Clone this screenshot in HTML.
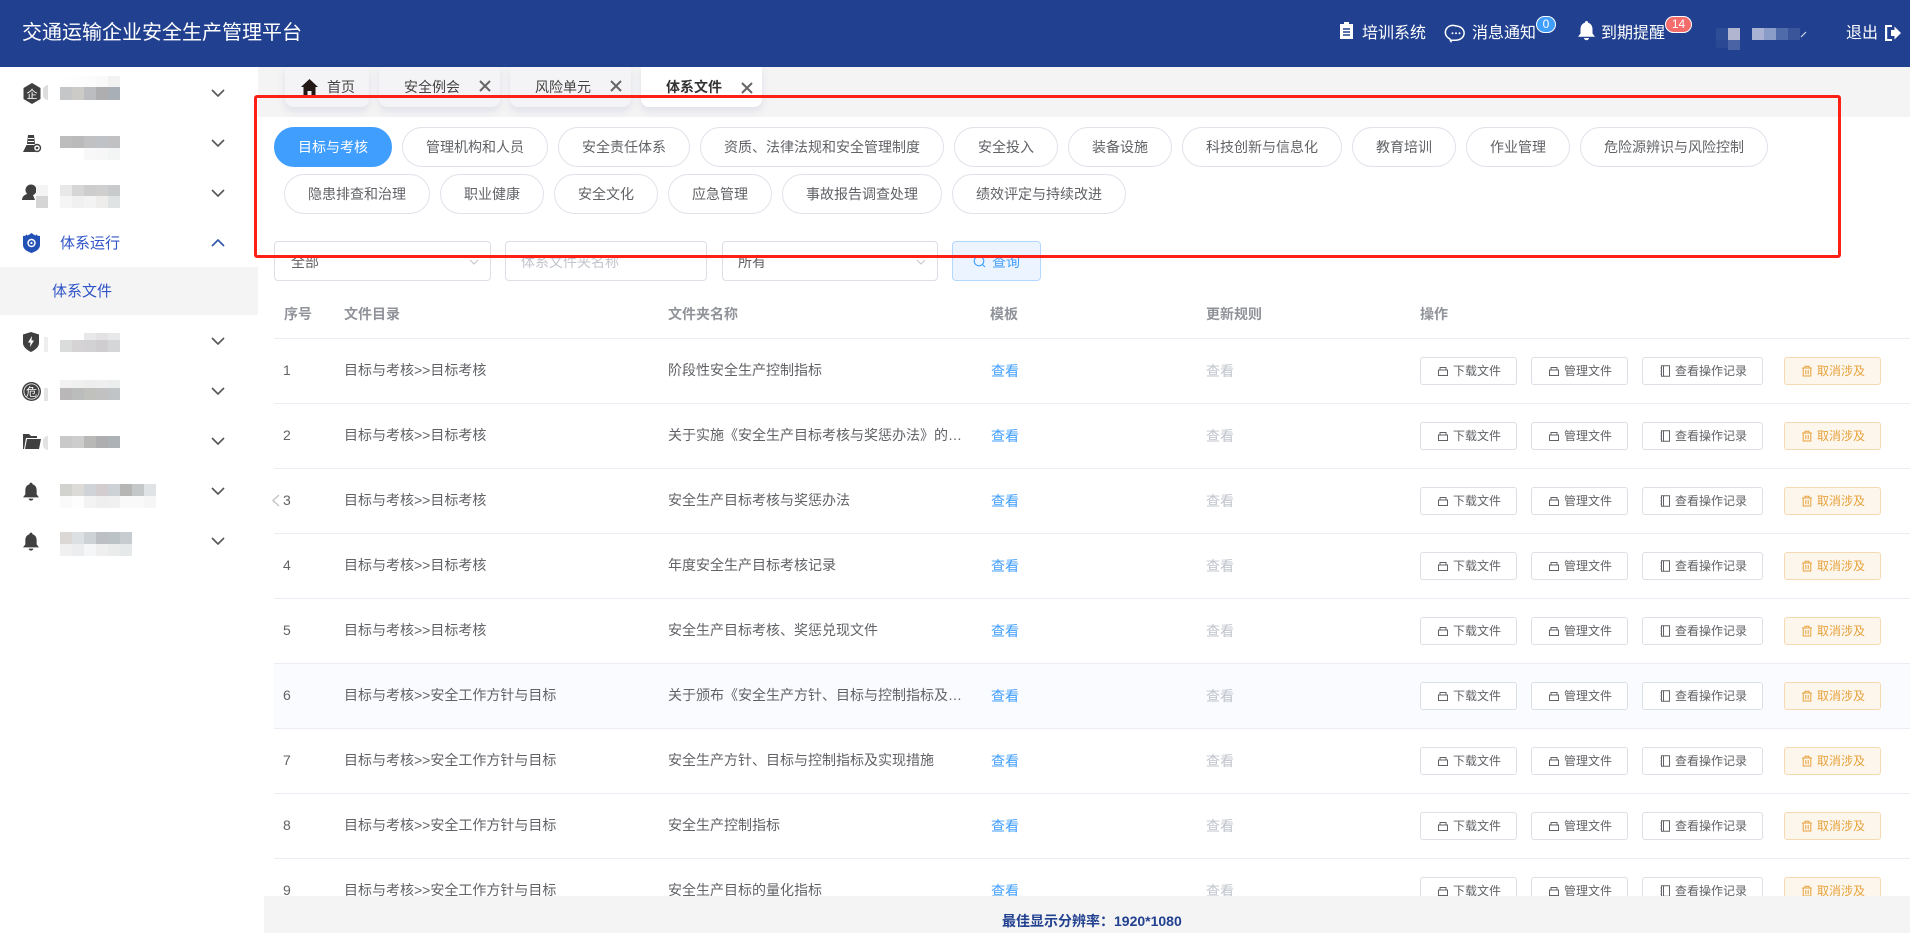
<!DOCTYPE html>
<html lang="zh-CN">
<head>
<meta charset="utf-8">
<title>交通运输企业安全生产管理平台</title>
<style>
*{box-sizing:border-box}
html,body{margin:0;padding:0;width:1910px;height:933px;overflow:hidden;background:#fff;font-family:"Liberation Sans","Noto Sans CJK SC",sans-serif;color:#606266}
.a{position:absolute;white-space:nowrap}
svg{position:absolute;display:block;overflow:visible}
#hd{position:absolute;left:0;top:0;width:1910px;height:67px;background:#21408f;color:#fff}
.ht{position:absolute;font-size:16px;line-height:24px;top:22px;white-space:nowrap;color:#fff}
.bdg{position:absolute;top:16px;height:17px;border-radius:9px;border:1px solid #fff;color:#fff;font-size:12px;line-height:15px;text-align:center}
#tabbar{position:absolute;left:258px;top:67px;width:1652px;height:50px;background:#f4f4f4}
.tab{position:absolute;top:67px;height:40px;background:#f4f4f6;border-radius:0 0 8px 8px;box-shadow:0 4px 8px rgba(90,100,170,.13)}
.tt{position:absolute;top:76px;font-size:14px;line-height:22px;color:#444;white-space:nowrap}
.pill{position:absolute;height:40px;border:1px solid #e1e2ea;border-radius:20px;background:#fff;font-size:14px;line-height:38px;text-align:center;color:#606266;white-space:nowrap}
.inp{position:absolute;top:241px;height:40px;border:1px solid #dcdfe6;border-radius:4px;background:#fff;font-size:14px;line-height:40px;padding-left:15px;color:#606266}
.th{position:absolute;top:303px;font-size:14px;font-weight:bold;line-height:22px;color:#909399;white-space:nowrap}
.r{position:absolute;left:274px;width:1636px;height:65px;border-bottom:1px solid #ebeef5;font-size:14px}
.r i{position:absolute;font-style:normal;top:20px;line-height:22px;white-space:nowrap}
.n{left:9px;color:#606266}
.d{left:70px}
.f{left:394px;width:296px;overflow:hidden;text-overflow:ellipsis}
.t{left:717px;color:#409eff;top:21px!important}
.u{left:932px;color:#c0c4cc;top:21px!important}
.b{position:absolute;top:18px;height:28px;border:1px solid #dcdfe6;border-radius:3px;background:#fff;font-size:12px;line-height:26px;color:#606266;font-weight:normal;white-space:nowrap}
.b svg{top:7px;width:12px;height:12px;fill:none;stroke:#606266;stroke-width:1}
.b1{left:1146px;width:97px;padding-left:32px}
.b1 svg{left:16px}
.b2{left:1257px;width:97px;padding-left:32px}
.b2 svg{left:16px}
.b3{left:1368px;width:121px;padding-left:32px}
.b3 svg{left:16px}
.b4{left:1510px;width:97px;padding-left:32px;background:#fdf6ec;border-color:#f5dab1;color:#e6a23c}
.b4 svg{left:16px;stroke:#e6a23c}
#side{position:absolute;left:0;top:67px;width:258px;height:866px;background:#fff}
.chev{fill:none;stroke:#555;stroke-width:1.6}
.mz{position:absolute;display:flex}
.mz s{display:block;width:12px;height:100%;text-decoration:none}
#foot{position:absolute;left:264px;top:896px;width:1646px;height:37px;background:#f4f4f4;z-index:5}
#red{position:absolute;left:254px;top:95px;width:1587px;height:163px;border:3px solid #ff2015;border-radius:3px;z-index:9}
</style>
</head>
<body>
<svg width="0" height="0" style="position:absolute">
<defs>
<symbol id="ibox" viewBox="0 0 12 12"><path d="M1.500 5h9v5.500h-9zM3 5V2.500h6V5"/></symbol>
<symbol id="ibook" viewBox="0 0 12 12"><path d="M2.500 .8h8v10.400h-8zM4.500 .8v10.400M1.500 3h1M1.500 6h1M1.500 9h1"/></symbol>
<symbol id="itrash" viewBox="0 0 12 12"><path d="M1 3h10M4 3V1.200h4V3M2.200 3v8h7.600V3M4.800 5v4.200M7.200 5v4.200"/></symbol>
<symbol id="bell" viewBox="0 0 17 20"><path d="M8.500 0a1.600 1.600 0 0 1 1.600 1.800c3 .8 4.400 3.400 4.400 6.300v4.400l2.500 3.200H0l2.500-3.200V8.100c0-2.900 1.400-5.500 4.400-6.300A1.600 1.600 0 0 1 8.500 0zM6 17h5a2.500 2.200 0 0 1-5 0z"/></symbol>
</defs>
</svg>

<div id="hd">
<div class="a" style="left:22px;top:19px;font-size:20px;line-height:28px;color:#fff">交通运输企业安全生产管理平台</div>
<svg style="left:1340px;top:22px" width="13" height="17" viewBox="0 0 13 17"><path fill="#fff" d="M4 0h5v2h4v15H0V2h4z"/><path stroke="#21408f" stroke-width="1.400" d="M3 7h7M3 10h7M3 13h7"/></svg>
<div class="ht" style="left:1362px">培训系统</div>
<svg style="left:1447px;top:25px" width="18" height="17" viewBox="0 0 18 17"><path fill="none" stroke="#fff" stroke-width="1.500" d="M9 1a8 7 0 0 1 0 14.200H4.500l-.5 1.200c-.5-.8-1-1.400-1.200-2.600A7.500 7 0 0 1 9 1z"/><circle cx="5.500" cy="8.200" r="1" fill="#fff"/><circle cx="9" cy="8.200" r="1" fill="#fff"/><circle cx="12.500" cy="8.200" r="1" fill="#fff"/></svg>
<div class="ht" style="left:1472px">消息通知</div>
<div class="bdg" style="left:1536px;width:20px;background:#409eff">0</div>
<svg style="left:1578px;top:21px;fill:#fff" width="17" height="20"><use href="#bell"/></svg>
<div class="ht" style="left:1601px">到期提醒</div>
<div class="bdg" style="left:1665px;width:27px;background:#f56c6c">14</div>
<div class="a" style="left:1716px;top:28px;width:12px;height:12px;background:#2f4c97"></div>
<div class="a" style="left:1728px;top:28px;width:12px;height:12px;background:#b1b5d0"></div>
<div class="a" style="left:1716px;top:40px;width:12px;height:8px;background:#2b4894"></div>
<div class="a" style="left:1728px;top:40px;width:12px;height:10px;background:#4a63a5"></div>
<div class="mz" style="left:1752px;top:28px;height:12px"><s style="background:#a9b2d3"></s><s style="background:#8a9cc8"></s><s style="background:#506ba9"></s><s style="background:#3a5599"></s></div>
<svg style="left:1800px;top:31px" width="7" height="7"><path d="M1 6L6 1" stroke="#cfd6ea" stroke-width="1.200"/></svg>
<div class="ht" style="left:1846px">退出</div>
<svg style="left:1885px;top:25px" width="16" height="16" viewBox="0 0 16 16"><path fill="#fff" d="M0 0h7v2H2.200v12H7v2H0zM6 5h3.500V1.500L16 8l-6.500 6.500V11H6z"/></svg>
</div>

<div id="tabbar"></div>
<div class="tab" style="left:285px;width:84px"></div>
<div class="tab" style="left:379px;width:121px"></div>
<div class="tab" style="left:510px;width:121px"></div>
<div class="tab" style="left:641px;width:121px;background:#fff"></div>
<svg style="left:301px;top:79px" width="17" height="16" viewBox="0 0 17 16"><path fill="#231815" d="M8.500 0L17 8h-2.500v8H10.500v-4h-4v4H2.500V8H0z"/></svg>
<div class="tt" style="left:327px">首页</div>
<div class="tt" style="left:404px">安全例会</div>
<svg style="left:480px;top:81px" width="10" height="10"><path d="M0 0L10 10M10 0L0 10" stroke="#666" stroke-width="2"/></svg>
<div class="tt" style="left:535px">风险单元</div>
<svg style="left:611px;top:81px" width="10" height="10"><path d="M0 0L10 10M10 0L0 10" stroke="#666" stroke-width="2"/></svg>
<div class="tt" style="left:666px;font-weight:bold;color:#333">体系文件</div>
<svg style="left:742px;top:83px" width="10" height="10"><path d="M0 0L10 10M10 0L0 10" stroke="#666" stroke-width="2"/></svg>

<div id="side">
<!-- row 1 -->
<svg style="left:23px;top:16px" width="18" height="21" viewBox="0 0 18 21"><path fill="#404040" d="M9 0l8.500 5v11L9 21 .5 16V5z"/><text x="9" y="15" font-size="11" text-anchor="middle" fill="#fff" font-family="Liberation Sans,Noto Sans CJK SC,sans-serif">企</text></svg>
<div class="a" style="left:43px;top:18px;width:5px;height:15px;background:#ddd;border-radius:5px 0 0 5px"></div>
<div class="mz" style="left:60px;top:9px;height:11px"><s style="background:#fefefe"></s><s style="background:#fdfdfd"></s><s style="background:#fcfcfc"></s><s style="background:#f9f9f9"></s><s style="background:#f2f2f2"></s></div>
<div class="mz" style="left:60px;top:20px;height:13px"><s style="background:#c4c6c8"></s><s style="background:#cdcbc7"></s><s style="background:#bcbdc0"></s><s style="background:#aeadb0"></s><s style="background:#a9afb6"></s></div>
<svg class="chev" style="left:211px;top:22px" width="14" height="8"><path d="M1 1l6 6 6-6"/></svg>
<!-- row 2 -->
<svg style="left:23px;top:68px" width="18" height="17" viewBox="0 0 18 17"><path fill="#404040" d="M5 0h6l1 9H4zM3.500 10h9l.8 3.500a4 4 0 0 0-1.300 3.500H0z"/><path stroke="#fff" d="M5 3.500h6M5 6.500h6"/><circle cx="14" cy="13" r="3.500" fill="#fff" stroke="#404040" stroke-width="1.400"/><circle cx="14" cy="13" r="1.300" fill="#404040"/></svg>
<div class="mz" style="left:60px;top:69px;height:12px"><s style="background:#bebdbe"></s><s style="background:#bababa"></s><s style="background:#c1c0c2"></s><s style="background:#bfc2c6"></s><s style="background:#c1c1c3"></s></div>
<div class="mz" style="left:60px;top:81px;height:12px"><s style="background:#fff"></s><s style="background:#fff"></s><s style="background:#f8f8f8"></s><s style="background:#f7f7f7"></s><s style="background:#f3f4f4"></s></div>
<svg class="chev" style="left:211px;top:72px" width="14" height="8"><path d="M1 1l6 6 6-6"/></svg>
<!-- row 3 -->
<svg style="left:22px;top:117px" width="16" height="20" viewBox="0 0 16 20"><circle cx="9" cy="6" r="5.500" fill="#404040"/><path fill="#404040" d="M5 10l6 1 2 5H0c0-3 2-5 5-6z"/></svg>
<div class="a" style="left:36px;top:118px;width:12px;height:11px;background:#f4f4f4"></div>
<div class="a" style="left:36px;top:129px;width:12px;height:12px;background:#d5d5d5"></div>
<div class="mz" style="left:60px;top:118px;height:11px"><s style="background:#e8e8e8"></s><s style="background:#d6d6d6"></s><s style="background:#cdcdcd"></s><s style="background:#cfcfcf"></s><s style="background:#c9cacb"></s></div>
<div class="mz" style="left:60px;top:129px;height:12px"><s style="background:#f5f5f5"></s><s style="background:#f0f0f0"></s><s style="background:#f3f3f3"></s><s style="background:#eeedec"></s><s style="background:#dfe3e4"></s></div>
<svg class="chev" style="left:211px;top:122px" width="14" height="8"><path d="M1 1l6 6 6-6"/></svg>
<!-- row 4 active -->
<svg style="left:23px;top:166px" width="17" height="20" viewBox="0 0 17 20"><path fill="#2350b5" d="M0 3c2 0 3-.5 4-2v1.500C6 2 7 1 8.500 0 10 1 11 2 13 2.500V1c1 1.500 2 2 4 2v9c0 4-4 6.500-8.500 8C4 18.500 0 16 0 12z"/><circle cx="8.500" cy="10" r="3.500" fill="none" stroke="#fff" stroke-width="1.500"/><circle cx="8.500" cy="10" r="1.100" fill="#fff"/></svg>
<div class="a" style="left:60px;top:166px;font-size:15px;line-height:22px;color:#2f54c8">体系运行</div>
<svg class="chev" style="left:211px;top:172px;stroke:#2f54a8" width="14" height="8"><path d="M1 7l6-6 6 6"/></svg>
<div class="a" style="left:0;top:200px;width:258px;height:48px;background:#f4f4f4"></div>
<div class="a" style="left:52px;top:214px;font-size:15px;line-height:22px;color:#2f54c8">体系文件</div>
<!-- row 5 -->
<svg style="left:23px;top:265px" width="16" height="20" viewBox="0 0 16 20"><path fill="#404040" d="M8 0l8 2.500V11c0 4-4 7-8 9-4-2-8-5-8-9V2.500z"/><path fill="#fff" d="M9 4L5 10.500h2.500L7 15l4-6.500H8.500z"/></svg>
<div class="a" style="left:44px;top:270px;width:4px;height:15px;background:#eee"></div>
<div class="mz" style="left:60px;top:266px;height:7px"><s></s><s></s><s style="background:#e8e8ea"></s><s style="background:#e2e2e4"></s><s style="background:#e6e8e9"></s></div>
<div class="mz" style="left:60px;top:273px;height:12px"><s style="background:#d9dcdb"></s><s style="background:#d5d3d4"></s><s style="background:#d2d2d4"></s><s style="background:#cfcdcf"></s><s style="background:#d4d6d7"></s></div>
<svg class="chev" style="left:211px;top:270px" width="14" height="8"><path d="M1 1l6 6 6-6"/></svg>
<!-- row 6 -->
<svg style="left:22px;top:315px" width="19" height="19" viewBox="0 0 19 19"><circle cx="9.500" cy="9.500" r="9.500" fill="#404040"/><circle cx="9.500" cy="9.500" r="7.600" fill="none" stroke="#fff" stroke-width=".8"/><text x="9.500" y="13.500" font-size="11" text-anchor="middle" fill="#fff" font-family="Liberation Sans,Noto Sans CJK SC,sans-serif">危</text></svg>
<div class="a" style="left:44px;top:321px;width:4px;height:13px;background:#e4e4e4"></div>
<div class="mz" style="left:60px;top:313px;height:8px"><s style="background:#f2f2f2"></s><s style="background:#f0f0f0"></s><s style="background:#eeeeee"></s><s style="background:#efefef"></s><s style="background:#eceeee"></s></div>
<div class="mz" style="left:60px;top:321px;height:12px"><s style="background:#b9b7b8"></s><s style="background:#bbbcbc"></s><s style="background:#c0c1bd"></s><s style="background:#c2c1c2"></s><s style="background:#c1c4c7"></s></div>
<svg class="chev" style="left:211px;top:320px" width="14" height="8"><path d="M1 1l6 6 6-6"/></svg>
<!-- row 7 -->
<svg style="left:23px;top:367px" width="18" height="15" viewBox="0 0 18 15"><path fill="#404040" d="M0 0h6l2 2h6v2H3L1 15H0zM4 5h14l-2 10H2z"/></svg>
<div class="a" style="left:43px;top:369px;width:5px;height:14px;background:#e2e2e2;border-radius:5px 0 0 5px"></div>
<div class="mz" style="left:60px;top:369px;height:12px"><s style="background:#c9c9c9"></s><s style="background:#cdcdcd"></s><s style="background:#b8b8b6"></s><s style="background:#aeaeb0"></s><s style="background:#adb2b6"></s></div>
<svg class="chev" style="left:211px;top:370px" width="14" height="8"><path d="M1 1l6 6 6-6"/></svg>
<!-- row 8 -->
<svg style="left:23px;top:415px;fill:#404040" width="16" height="20"><use href="#bell"/></svg>
<div class="mz" style="left:60px;top:417px;height:12px"><s style="background:#d2d3cf"></s><s style="background:#dddbd7"></s><s style="background:#d0d4d9"></s><s style="background:#d4cdd0"></s><s style="background:#cdd2d6"></s><s style="background:#b6b6b4"></s><s style="background:#c5c8c8"></s><s style="background:#e0e3e6"></s></div>
<div class="mz" style="left:60px;top:429px;height:12px"><s style="background:#fafafa"></s><s style="background:#fdfdfd"></s><s style="background:#f3f3f3"></s><s style="background:#efefef"></s><s style="background:#f0f0f0"></s><s style="background:#f9f9f9"></s><s style="background:#f9f9f9"></s><s style="background:#f6f6f6"></s></div>
<svg class="chev" style="left:211px;top:420px" width="14" height="8"><path d="M1 1l6 6 6-6"/></svg>
<!-- row 9 -->
<svg style="left:23px;top:465px;fill:#404040" width="16" height="20"><use href="#bell"/></svg>
<div class="mz" style="left:60px;top:465px;height:12px"><s style="background:#dcd8d6"></s><s style="background:#dde0e2"></s><s style="background:#ccd2d6"></s><s style="background:#bcc0c4"></s><s style="background:#bcc3c7"></s><s style="background:#c6cccf"></s></div>
<div class="mz" style="left:60px;top:477px;height:12px"><s style="background:#f0f0f1"></s><s style="background:#ebedef"></s><s style="background:#f5f6f7"></s><s style="background:#efefef"></s><s style="background:#eaebeb"></s><s style="background:#e6e9ea"></s></div>
<svg class="chev" style="left:211px;top:470px" width="14" height="8"><path d="M1 1l6 6 6-6"/></svg>
</div>

<!-- pills -->
<div class="pill" style="left:274px;top:127px;width:118px;background:#409eff;border-color:#409eff;color:#fff">目标与考核</div>
<div class="pill" style="left:402px;top:127px;width:146px">管理机构和人员</div>
<div class="pill" style="left:558px;top:127px;width:132px">安全责任体系</div>
<div class="pill" style="left:700px;top:127px;width:244px">资质、法律法规和安全管理制度</div>
<div class="pill" style="left:954px;top:127px;width:104px">安全投入</div>
<div class="pill" style="left:1068px;top:127px;width:104px">装备设施</div>
<div class="pill" style="left:1182px;top:127px;width:160px">科技创新与信息化</div>
<div class="pill" style="left:1352px;top:127px;width:104px">教育培训</div>
<div class="pill" style="left:1466px;top:127px;width:104px">作业管理</div>
<div class="pill" style="left:1580px;top:127px;width:188px">危险源辨识与风险控制</div>
<div class="pill" style="left:284px;top:174px;width:146px">隐患排查和治理</div>
<div class="pill" style="left:440px;top:174px;width:104px">职业健康</div>
<div class="pill" style="left:554px;top:174px;width:104px">安全文化</div>
<div class="pill" style="left:668px;top:174px;width:104px">应急管理</div>
<div class="pill" style="left:782px;top:174px;width:160px">事故报告调查处理</div>
<div class="pill" style="left:952px;top:174px;width:174px">绩效评定与持续改进</div>

<!-- filters -->
<div class="inp" style="left:274px;width:217px;padding-left:16px">全部</div>
<svg style="left:469px;top:259px" width="10" height="6"><path d="M1 1l4 4 4-4" fill="none" stroke="#c0c4cc"/></svg>
<div class="inp" style="left:505px;width:202px;color:#c0c4cc">体系文件夹名称</div>
<div class="inp" style="left:722px;width:216px">所有</div>
<svg style="left:916px;top:259px" width="10" height="6"><path d="M1 1l4 4 4-4" fill="none" stroke="#c0c4cc"/></svg>
<div class="inp" style="left:952px;width:89px;background:#ecf5ff;border-color:#b3d8ff;color:#409eff;padding-left:39px">查询</div>
<svg style="left:973px;top:255px" width="13" height="13" viewBox="0 0 13 13"><circle cx="6" cy="6" r="4.800" fill="none" stroke="#409eff" stroke-width="1.100"/><path d="M9.500 9.500L12 12" stroke="#409eff" stroke-width="1.100"/></svg>

<!-- table head -->
<div class="th" style="left:284px">序号</div>
<div class="th" style="left:344px">文件目录</div>
<div class="th" style="left:668px">文件夹名称</div>
<div class="th" style="left:990px">模板</div>
<div class="th" style="left:1206px">更新规则</div>
<div class="th" style="left:1420px">操作</div>
<div class="a" style="left:274px;top:338px;width:1636px;height:1px;background:#ebeef5"></div>

<div class="r" style="top:339px"><i class="n">1</i><i class="d">目标与考核&gt;&gt;目标考核</i><i class="f">阶段性安全生产控制指标</i><i class="t">查看</i><i class="u">查看</i><b class="b b1"><svg><use href="#ibox"/></svg>下载文件</b><b class="b b2"><svg><use href="#ibox"/></svg>管理文件</b><b class="b b3"><svg><use href="#ibook"/></svg>查看操作记录</b><b class="b b4"><svg><use href="#itrash"/></svg>取消涉及</b></div>
<div class="r" style="top:404px"><i class="n">2</i><i class="d">目标与考核&gt;&gt;目标考核</i><i class="f">关于实施《安全生产目标考核与奖惩办法》的通知</i><i class="t">查看</i><i class="u">查看</i><b class="b b1"><svg><use href="#ibox"/></svg>下载文件</b><b class="b b2"><svg><use href="#ibox"/></svg>管理文件</b><b class="b b3"><svg><use href="#ibook"/></svg>查看操作记录</b><b class="b b4"><svg><use href="#itrash"/></svg>取消涉及</b></div>
<div class="r" style="top:469px"><i class="n">3</i><i class="d">目标与考核&gt;&gt;目标考核</i><i class="f">安全生产目标考核与奖惩办法</i><i class="t">查看</i><i class="u">查看</i><b class="b b1"><svg><use href="#ibox"/></svg>下载文件</b><b class="b b2"><svg><use href="#ibox"/></svg>管理文件</b><b class="b b3"><svg><use href="#ibook"/></svg>查看操作记录</b><b class="b b4"><svg><use href="#itrash"/></svg>取消涉及</b></div>
<div class="r" style="top:534px"><i class="n">4</i><i class="d">目标与考核&gt;&gt;目标考核</i><i class="f">年度安全生产目标考核记录</i><i class="t">查看</i><i class="u">查看</i><b class="b b1"><svg><use href="#ibox"/></svg>下载文件</b><b class="b b2"><svg><use href="#ibox"/></svg>管理文件</b><b class="b b3"><svg><use href="#ibook"/></svg>查看操作记录</b><b class="b b4"><svg><use href="#itrash"/></svg>取消涉及</b></div>
<div class="r" style="top:599px"><i class="n">5</i><i class="d">目标与考核&gt;&gt;目标考核</i><i class="f">安全生产目标考核、奖惩兑现文件</i><i class="t">查看</i><i class="u">查看</i><b class="b b1"><svg><use href="#ibox"/></svg>下载文件</b><b class="b b2"><svg><use href="#ibox"/></svg>管理文件</b><b class="b b3"><svg><use href="#ibook"/></svg>查看操作记录</b><b class="b b4"><svg><use href="#itrash"/></svg>取消涉及</b></div>
<div class="r" style="top:664px;background:#fafbfe"><i class="n">6</i><i class="d">目标与考核&gt;&gt;安全工作方针与目标</i><i class="f">关于颁布《安全生产方针、目标与控制指标及实现措施》的通知</i><i class="t">查看</i><i class="u">查看</i><b class="b b1"><svg><use href="#ibox"/></svg>下载文件</b><b class="b b2"><svg><use href="#ibox"/></svg>管理文件</b><b class="b b3"><svg><use href="#ibook"/></svg>查看操作记录</b><b class="b b4"><svg><use href="#itrash"/></svg>取消涉及</b></div>
<div class="r" style="top:729px"><i class="n">7</i><i class="d">目标与考核&gt;&gt;安全工作方针与目标</i><i class="f">安全生产方针、目标与控制指标及实现措施</i><i class="t">查看</i><i class="u">查看</i><b class="b b1"><svg><use href="#ibox"/></svg>下载文件</b><b class="b b2"><svg><use href="#ibox"/></svg>管理文件</b><b class="b b3"><svg><use href="#ibook"/></svg>查看操作记录</b><b class="b b4"><svg><use href="#itrash"/></svg>取消涉及</b></div>
<div class="r" style="top:794px"><i class="n">8</i><i class="d">目标与考核&gt;&gt;安全工作方针与目标</i><i class="f">安全生产控制指标</i><i class="t">查看</i><i class="u">查看</i><b class="b b1"><svg><use href="#ibox"/></svg>下载文件</b><b class="b b2"><svg><use href="#ibox"/></svg>管理文件</b><b class="b b3"><svg><use href="#ibook"/></svg>查看操作记录</b><b class="b b4"><svg><use href="#itrash"/></svg>取消涉及</b></div>
<div class="r" style="top:859px"><i class="n">9</i><i class="d">目标与考核&gt;&gt;安全工作方针与目标</i><i class="f">安全生产目标的量化指标</i><i class="t">查看</i><i class="u">查看</i><b class="b b1"><svg><use href="#ibox"/></svg>下载文件</b><b class="b b2"><svg><use href="#ibox"/></svg>管理文件</b><b class="b b3"><svg><use href="#ibook"/></svg>查看操作记录</b><b class="b b4"><svg><use href="#itrash"/></svg>取消涉及</b></div>

<svg style="left:271px;top:494px;z-index:4" width="9" height="13"><path d="M8 1L2 6.500 8 12" fill="none" stroke="#c4c4c4" stroke-width="1.400"/></svg>

<div id="foot"><div class="a" style="left:738px;top:14px;font-size:14px;line-height:22px;font-weight:bold;color:#21408f">最佳显示分辨率：1920*1080</div></div>
<div id="red"></div>
</body>
</html>
